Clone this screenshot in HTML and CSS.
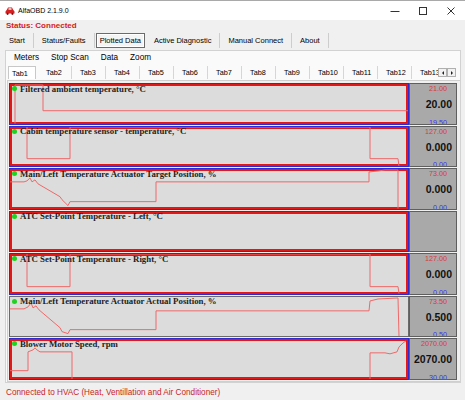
FILE: index.html
```html
<!DOCTYPE html>
<html lang="en">

<head>
  <meta charset="UTF-8">
  <title>AlfaOBD 2.1.9.0</title>
  <link rel="stylesheet" href="styles.css">
</head>

<body>
  <div class="window">

    <div class="titlebar">
      <svg class="app-icon" viewBox="0 0 10 8">
        <path d="M0.5 4.5 L2 2.5 L3 0.5 H7 L8 2.5 L9.5 4.5 V6.5 H0.5Z" fill="#d42020"/>
        <rect x="3.5" y="1.3" width="3" height="1.4" fill="#fff"/>
        <circle cx="2.6" cy="6.8" r="1.1" fill="#7a1010"/>
        <circle cx="7.4" cy="6.8" r="1.1" fill="#7a1010"/>
      </svg>
      <span class="title">AlfaOBD 2.1.9.0</span>
      <div class="controls">
        <span><svg width="10" height="10" viewBox="0 0 10 10"><path d="M0.5 5.5 H9.5" stroke="#333" fill="none"/></svg></span>
        <span><svg width="10" height="10" viewBox="0 0 10 10"><rect x="1.5" y="1.5" width="7" height="7" stroke="#333" fill="none"/></svg></span>
        <span><svg width="10" height="10" viewBox="0 0 10 10"><path d="M1.5 1.5 L8.5 8.5 M8.5 1.5 L1.5 8.5" stroke="#333" fill="none"/></svg></span>
      </div>
    </div>

    <div class="status">Status: Connected</div>

    <nav class="menu">
      <span class="menu-item">Start</span>
      <span class="menu-item">Status/Faults</span>
      <span class="menu-item selected">Plotted Data</span>
      <span class="menu-item">Active Diagnostic</span>
      <span class="menu-item">Manual Connect</span>
      <span class="menu-item">About</span>
    </nav>

    <section class="panel">
      <div class="toolbar">
        <span>Meters</span>
        <span>Stop Scan</span>
        <span>Data</span>
        <span>Zoom</span>
      </div>

      <div class="tab-strip">
        <div class="tabs">
          <span class="tab active">Tab1</span>
          <span class="tab">Tab2</span>
          <span class="tab">Tab3</span>
          <span class="tab">Tab4</span>
          <span class="tab">Tab5</span>
          <span class="tab">Tab6</span>
          <span class="tab">Tab7</span>
          <span class="tab">Tab8</span>
          <span class="tab">Tab9</span>
          <span class="tab">Tab10</span>
          <span class="tab">Tab11</span>
          <span class="tab">Tab12</span>
          <span class="tab">Tab13</span>
        </div>
        <div class="tab-scroll">
          <span class="arrow left"></span>
          <span class="arrow right"></span>
        </div>
      </div>

      <div class="page">
        <div class="plots">

          <div class="row">
            <div class="chart">
              <svg class="trace" viewBox="0 0 398 40" preserveAspectRatio="none">
                <polyline points="5,40 5,1 33,1 33,27 398,27"/>
              </svg>
              <div class="label"><i class="dot"></i>Filtered ambient temperature, °C</div>
            </div>
            <div class="readout">
              <span class="max">21.00</span>
              <span class="val">20.00</span>
              <span class="min">19.50</span>
            </div>
          </div>

          <div class="row">
            <div class="chart">
              <svg class="trace" viewBox="0 0 398 40" preserveAspectRatio="none">
                <polyline points="17,0 17,32 60,32 60,0 360,0 360,32 388,32 389,40"/>
              </svg>
              <div class="label"><i class="dot"></i>Cabin temperature sensor - temperature, °C</div>
            </div>
            <div class="readout">
              <span class="max">127.00</span>
              <span class="val">0.000</span>
              <span class="min">0.00</span>
            </div>
          </div>

          <div class="row">
            <div class="chart">
              <svg class="trace" viewBox="0 0 398 40" preserveAspectRatio="none">
                <polyline points="0,13 14,13 17,12 20,9 22,13 25,11 28,15 50,28 52,31 58,37 60,33 146,33 146,13 359,13 359,3 368,2 375,1 388,1 388,40"/>
              </svg>
              <div class="label"><i class="dot"></i>Main/Left Temperature Actuator Target Position, %</div>
            </div>
            <div class="readout">
              <span class="max">73.00</span>
              <span class="val">0.000</span>
              <span class="min">0.00</span>
            </div>
          </div>

          <div class="row">
            <div class="chart">
              <div class="label"><i class="dot"></i>ATC Set-Point Temperature - Left, °C</div>
            </div>
            <div class="readout"></div>
          </div>

          <div class="row">
            <div class="chart">
              <svg class="trace" viewBox="0 0 398 40" preserveAspectRatio="none">
                <polyline points="17,0 17,33 60,33 60,0 360,0 360,33 388,33 389,40"/>
              </svg>
              <div class="label"><i class="dot"></i>ATC Set-Point Temperature - Right, °C</div>
            </div>
            <div class="readout">
              <span class="max">127.00</span>
              <span class="val">0.000</span>
              <span class="min">0.00</span>
            </div>
          </div>

          <div class="row">
            <div class="chart plain">
              <svg class="trace" viewBox="0 0 398 40" preserveAspectRatio="none">
                <polyline points="0,12 14,12 18,10 21,6 23,11 26,9 29,13 50,31 52,35 58,37 60,33 146,33 146,14 359,14 360,4 368,2 388,1 389,40 398,40"/>
              </svg>
              <div class="label"><i class="dot"></i>Main/Left Temperature Actuator Actual Position, %</div>
            </div>
            <div class="readout">
              <span class="max">73.50</span>
              <span class="val">0.500</span>
              <span class="min">0.50</span>
            </div>
          </div>

          <div class="row">
            <div class="chart">
              <svg class="trace" viewBox="0 0 398 40" preserveAspectRatio="none">
                <polyline points="0,32 18,32 18,13 23,11 25,9 27,11 30,13 62,13 62,41 360,41 360,14 375,14 380,15 387,13 389,8 393,4 396,2"/>
              </svg>
              <div class="label"><i class="dot"></i>Blower Motor Speed, rpm</div>
            </div>
            <div class="readout">
              <span class="max">2070.00</span>
              <span class="val">2070.00</span>
              <span class="min">30.00</span>
            </div>
          </div>

        </div>
      </div>
    </section>

    <div class="footer">Connected to HVAC (Heat, Ventillation and Air Conditioner)</div>
  </div>
</body>

</html>
```

FILE: styles.css
```css
/* Window frame */
body {
  margin: 0;
  background: #f0f0f0;
  font-family: "Liberation Sans", Arial, sans-serif;
  color: #000;
}

.window {
  width: 465px;
  height: 400px;
  overflow: hidden;
  border-top: 1px solid #a9a9a9;
  box-sizing: border-box;
}

/* Title bar */
.titlebar {
  display: flex;
  align-items: center;
  height: 19px;
  background: #fff;
  padding-left: 5px;
}

.app-icon {
  width: 10px;
  height: 8px;
  margin-right: 3px;
}

.title {
  font-size: 7px;
}

.controls {
  margin-left: auto;
  display: flex;
}

.controls span {
  width: 28px;
  display: flex;
  justify-content: center;
}

/* Status line */
.status {
  height: 11px;
  line-height: 11px;
  padding-left: 6px;
  font-size: 8px;
  font-weight: bold;
  color: #d41a1a;
}

/* Top menu */
.menu {
  display: flex;
  padding: 2px 0 2px 1px;
  font-size: 7.5px;
}

.menu-item {
  height: 15px;
  line-height: 15px;
  padding: 0 8px;
  border-right: 1px solid #cdcdcd;
}

.menu-item.selected {
  height: 13px;
  line-height: 13px;
  padding: 0 3px;
  margin: 0 1px 0 1px;
  border: 1px solid #6b6b6b;
  box-shadow: inset 0 0 0 1px #fff;
  background: #f4f4f4;
}

/* Main panel */
.panel {
  margin-left: 5px;
  width: 456px;
  border: 1px solid #d2d2d2;
  background: #fafafa;
  box-sizing: border-box;
}

.toolbar {
  display: flex;
  gap: 12px;
  height: 14px;
  line-height: 14px;
  padding-left: 8px;
  font-size: 8.2px;
}

/* Tab strip */
.tab-strip {
  display: flex;
  height: 15px;
}

.tabs {
  flex: 1;
  display: flex;
  overflow: hidden;
  padding-left: 2px;
  padding-top: 1px;
}

.tab {
  flex: none;
  width: 34px;
  height: 13px;
  line-height: 13px;
  padding-left: 8px;
  box-sizing: border-box;
  border-right: 1px solid #d6d6d6;
  font-size: 7.3px;
}

.tab.active {
  width: 28px;
  padding-left: 3px;
  margin-right: 2px;
  background: #fff;
  border: 1px solid #c8c8c8;
  border-bottom: none;
}

.tab-scroll {
  display: flex;
  margin: 3px 4px 0 0;
}

.arrow {
  width: 9px;
  height: 9px;
  box-sizing: border-box;
  border: 1px solid #b0b0b0;
  background: #f2f2f2;
  display: flex;
  align-items: center;
  justify-content: center;
}

.arrow::before {
  content: "";
  border-top: 2px solid transparent;
  border-bottom: 2px solid transparent;
}

.arrow.left::before {
  border-right: 2px solid #222;
}

.arrow.right::before {
  border-left: 2px solid #222;
}

/* Plot page */
.page {
  margin-left: 1px;
  border-top: 1px solid #cfcfcf;
  border-left: 1px solid #cfcfcf;
  border-bottom: 1px solid #cfcfcf;
  padding: 2px 0 1px 1px;
  background: #f0f0f0;
}

.plots {
  display: flex;
  flex-direction: column;
  gap: 1px;
  height: 297px;
}

.row {
  flex: 1;
  display: flex;
}

.chart {
  position: relative;
  width: 400px;
  box-sizing: border-box;
  border: 1px solid #2b2bd2;
  box-shadow: inset 0 0 0 2px #e41616;
  background: #dcdcdc;
  overflow: hidden;
}

.chart.plain {
  border-color: #6a6a6a;
  box-shadow: none;
}

.trace {
  position: absolute;
  left: 0;
  top: 0;
  width: 100%;
  height: 100%;
}

.trace polyline {
  fill: none;
  stroke: #f06868;
  stroke-width: 1;
  vector-effect: non-scaling-stroke;
}

.label {
  position: relative;
  display: flex;
  align-items: center;
  height: 9px;
  padding-left: 2px;
  font-family: "Liberation Serif", "Times New Roman", serif;
  font-size: 8.8px;
  font-weight: bold;
  color: #1e1e1e;
  white-space: nowrap;
}

.dot {
  width: 5px;
  height: 5px;
  border-radius: 50%;
  background: #1fd21f;
  margin-right: 3px;
}

/* Value column */
.readout {
  width: 48px;
  box-sizing: border-box;
  border: 1px solid #5f5f5f;
  background: #a9a9a9;
  display: flex;
  flex-direction: column;
  align-items: flex-end;
  padding-right: 4px;
  overflow: hidden;
}

.max,
.min {
  font-size: 7.2px;
  line-height: 9px;
  margin-right: 5px;
}

.max {
  color: #d83a3a;
}

.min {
  color: #3434f0;
  margin-top: auto;
  margin-bottom: -3px;
}

.val {
  margin-top: 5px;
  font-size: 10.5px;
  line-height: 13px;
  font-weight: bold;
  color: #111;
}

/* Bottom status */
.footer {
  padding: 3px 0 0 6px;
  line-height: 14px;
  font-size: 8.2px;
  color: #c81e1e;
}
```
